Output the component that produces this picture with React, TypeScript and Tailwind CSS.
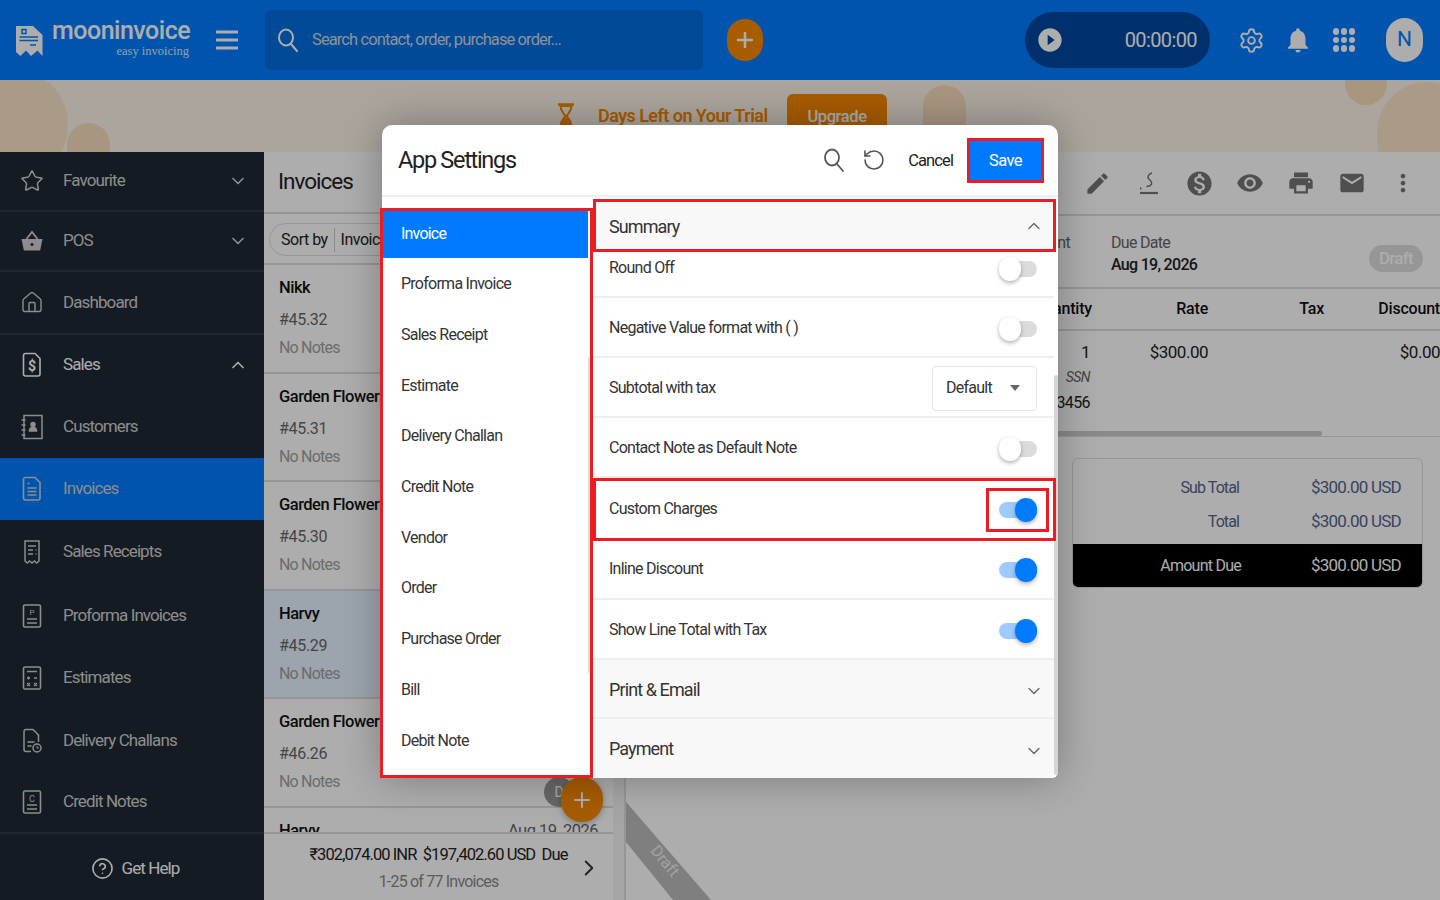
import { Star, House, CircleHelp, RotateCcw, Settings, ChevronDown, ChevronUp, ChevronRight, Plus } from "lucide-react";
import { MdEdit, MdMonetizationOn, MdRemoveRedEye, MdPrint, MdEmail, MdMoreVert, MdNotifications, MdPlayCircleFilled } from "react-icons/md";

const font = { fontFamily: "Roboto, 'Noto Sans', sans-serif" };

const SearchIcon = ({ size = 24, width = 2 }: { size?: number; width?: number }) => (
  <svg width={size} height={size} viewBox="0 0 24 24" fill="none" stroke="currentColor" strokeWidth={width} strokeLinecap="round">
    <ellipse cx="10" cy="9.500" rx="7" ry="8" />
    <path d="M15 16l6 7" />
  </svg>
);

const Doc = ({ children }: { children?: React.ReactNode }) => (
  <svg width="24" height="26" viewBox="0 0 24 26" fill="none" stroke="currentColor" strokeWidth="1.600">
    <rect x="3.500" y="2" width="17" height="22" rx="1.500" />
    {children}
  </svg>
);

const BasketIcon = () => (
  <svg width="24" height="24" viewBox="0 0 24 24" fill="currentColor">
    <path d="M1.500 10h21l-2.400 11.500H3.900z" />
    <path d="M6.500 10 12 3l5.500 7" fill="none" stroke="currentColor" strokeWidth="1.800" />
    <circle cx="12" cy="15.500" r="1.500" fill="#1f2833" />
  </svg>
);

const SalesIcon = () => (
  <svg width="24" height="26" viewBox="0 0 24 26" fill="none" stroke="currentColor" strokeWidth="1.600">
    <path d="M5.500 1.500H15l5 5V22a2 2 0 0 1-2 2H5.500a2 2 0 0 1-2-2V3.500a2 2 0 0 1 2-2z" />
    <text x="12" y="19" textAnchor="middle" fontSize="14" fontWeight="700" fill="currentColor" stroke="none">$</text>
  </svg>
);

const CustomersIcon = () => (
  <svg width="24" height="26" viewBox="0 0 24 26" fill="none" stroke="currentColor" strokeWidth="1.500">
    <rect x="4" y="1.500" width="18" height="23" />
    <path d="M1.500 6h4M1.500 11h4M1.500 16h4M1.500 21h4" />
    <circle cx="13" cy="10.500" r="2" fill="currentColor" />
    <path d="M9.500 17c0-5 7-5 7 0z" fill="currentColor" />
  </svg>
);

const InvoiceIcon = () => (
  <svg width="24" height="26" viewBox="0 0 24 26" fill="none" stroke="currentColor" strokeWidth="1.600">
    <path d="M5.500 1.500H15l5 5V22a2 2 0 0 1-2 2H5.500a2 2 0 0 1-2-2V3.500a2 2 0 0 1 2-2z" />
    <path d="M7.500 7.500h2M7.500 12h9M7.500 15.500h9M7.500 19h9" />
  </svg>
);

const ReceiptIcon = () => (
  <svg width="24" height="26" viewBox="0 0 24 26" fill="none" stroke="currentColor" strokeWidth="1.500">
    <path d="M5 2h14v20l-2.300 2-2.300-2-2.400 2-2.400-2-2.300 2L5 22z" />
    <path d="M8 7h8M8 11h5M8 15h5M15.500 11h1M15.500 15h1" />
  </svg>
);

const ProformaIcon = () => (
  <Doc>
    <text x="12" y="12" textAnchor="middle" fontSize="8" fill="currentColor" stroke="none">P</text>
    <path d="M7 16h10M7 20h10" />
  </Doc>
);

const EstimateIcon = () => (
  <Doc>
    <path d="M7 6.500h10M7 13h3M8.500 11.500v3M14 13h3M7 18l3 3M10 18l-3 3M14 18l3 3M17 18l-3 3" strokeWidth="1.300" />
  </Doc>
);

const ChallanIcon = () => (
  <svg width="24" height="26" viewBox="0 0 24 26" fill="none" stroke="currentColor" strokeWidth="1.500">
    <path d="M11 23.500H6a2 2 0 0 1-2-2v-18a2 2 0 0 1 2-2h7l5.500 5.500v7" />
    <path d="M7.500 14h7M7.500 18h4" />
    <circle cx="17" cy="20" r="4" />
    <path d="M17 18v2h2" strokeWidth="1" />
  </svg>
);

const CreditIcon = () => (
  <Doc>
    <text x="12" y="12.500" textAnchor="middle" fontSize="9" fill="currentColor" stroke="none">C</text>
    <path d="M7 16h10M7 20h10" />
  </Doc>
);

const SignIcon = () => (
  <svg width="22" height="26" viewBox="0 0 22 26" fill="none" stroke="currentColor" strokeWidth="1.500">
    <path d="M14 3c-3 1-5 3.500-3.500 5.500s4 3 3 5.500c-.7 1.700-3 2.500-5 2.500" />
    <path d="M2 18.500h1.500" strokeWidth="2" />
    <path d="M2 23h18" strokeWidth="2.200" />
  </svg>
);

const HourglassIcon = () => (
  <svg width="18" height="26" viewBox="0 0 18 26" className="shrink-0">
    <path d="M1 1.500h16M1 24.500h16" stroke="currentColor" strokeWidth="2.500" />
    <path d="M3.500 3c0 5 3 7 4.500 9.500v1C6.500 16 3.500 18 3.500 23h11c0-5-3-7-4.500-9.500v-1C11.500 10 14.500 8 14.500 3z" fill="none" stroke="currentColor" strokeWidth="2" />
    <path d="M3.500 23c0-4 3-6.500 5.500-9 2.500 2.500 5.500 5 5.500 9z" fill="currentColor" />
  </svg>
);

const AppsIcon = () => (
  <div className="grid grid-cols-3 gap-[2px]">
    {Array.from({ length: 9 }).map((_, i) => (
      <div key={i} className="h-[6.500px] w-[6px] rounded-full bg-white" />
    ))}
  </div>
);

const Logo = () => (
  <svg width="27" height="31" viewBox="0 0 27 31" className="shrink-0">
    <path d="M0 1h17l9.500 9v21l-5-5.500L15 31l-5-5.500L4.500 31 0 27z" fill="#ffffff" />
    <path d="M6 4.500h4v4H6zM3.500 12H22M3.500 15.500H22M14 20h6" stroke="#007cff" strokeWidth="1.500" fill="none" />
  </svg>
);

const sideItems = [
  { label: "Favourite", icon: <Star size={24} strokeWidth={1.500} />, h: "h-[60px]", chevron: "down", line: true },
  { label: "POS", icon: <BasketIcon />, h: "h-[60px]", chevron: "down", line: true },
  { label: "Dashboard", icon: <House size={25} strokeWidth={1.400} />, h: "h-[63px]", line: true },
  { label: "Sales", icon: <SalesIcon />, h: "h-[60px]", chevron: "up", bright: true },
  { label: "Customers", icon: <CustomersIcon />, h: "h-[63px]" },
  { label: "Invoices", icon: <InvoiceIcon />, h: "h-[62px]", active: true },
  { label: "Sales Receipts", icon: <ReceiptIcon />, h: "h-[64px]" },
  { label: "Proforma Invoices", icon: <ProformaIcon />, h: "h-[63px]" },
  { label: "Estimates", icon: <EstimateIcon />, h: "h-[62px]" },
  { label: "Delivery Challans", icon: <ChallanIcon />, h: "h-[63px]" },
  { label: "Credit Notes", icon: <CreditIcon />, h: "h-[60px]" },
];

const invoices = [
  { name: "Nikk", no: "#45.32" },
  { name: "Garden Flower", no: "#45.31" },
  { name: "Garden Flower", no: "#45.30" },
  { name: "Harvy", no: "#45.29", selected: true },
  { name: "Garden Flower", no: "#46.26" },
];

const navItems = ["Proforma Invoice", "Sales Receipt", "Estimate", "Delivery Challan", "Credit Note", "Vendor", "Order", "Purchase Order", "Bill", "Debit Note"];

const Toggle = ({ on }: { on?: boolean }) => (
  <div className="relative h-[24px] w-[38px] shrink-0">
    <div className={`absolute left-0 right-0 top-[4px] h-[16px] rounded-full ${on ? "bg-[#9ecbff]" : "bg-[#dcdcdc]"}`} />
    <div className={`absolute top-0 h-[24px] w-[22px] rounded-full shadow-[0_2px_4px_rgba(0,0,0,0.3)] ${on ? "right-0 bg-[#007bff]" : "left-0 bg-white"}`} />
  </div>
);

const Row = ({ label, children, h = "h-[60px]", text = "pt-[2px]" }: { label: string; children: React.ReactNode; h?: string; text?: string }) => (
  <div className={`mr-[2px] flex ${h} shrink-0 items-center justify-between border-b-2 border-[#eeeeee] pl-[16px] pr-[17px] text-[16px] tracking-[-0.75px] text-[#333333]`}>
    <span className={text}>{label}</span>
    {children}
  </div>
);

export default function App() {
  return (
    <div style={font} className="relative h-[900px] w-[1440px] overflow-hidden bg-white">
      <div className="flex h-full flex-col">
        {/* top bar */}
        <header className="flex h-[80px] shrink-0 items-center bg-[#007cff] text-white">
          <div className="flex w-[265px] items-center pl-[16px]">
            <Logo />
            <div className="ml-[9px] flex w-[139px] flex-col">
              <span className="-mt-[6px] text-[25px] font-medium leading-[30px] tracking-[-0.5px]">mooninvoice</span>
              <span style={{ fontFamily: "'Liberation Serif', serif" }} className="-mt-[1px] pr-[2px] text-right text-[12.500px] leading-[13px] text-[#dbe9f7]">easy invoicing</span>
            </div>
            <svg width="22" height="20" viewBox="0 0 22 20" className="ml-[25px] shrink-0" stroke="#ffffff" strokeWidth="3">
              <path d="M0 2h22M0 10h22M0 18h22" />
            </svg>
          </div>
          <div className="flex h-[60px] w-[438px] items-center rounded-[6px] bg-[#006de0] pl-[11px] text-white">
            <SearchIcon size={24} />
            <span className="ml-[12px] text-[16.500px] tracking-[-0.9px] text-[#cfd8e3]">Search contact, order, purchase order...</span>
          </div>
          <div className="ml-[24px] flex h-[42px] w-[36px] items-center justify-center rounded-full bg-[#f78800]">
            <Plus size={24} strokeWidth={2.500} className="text-white" />
          </div>
          <div className="ml-[262px] flex h-[56px] w-[185px] items-center justify-between rounded-full bg-[#00479e] pl-[11px] pr-[13px] text-white">
            <MdPlayCircleFilled size={28} />
            <span className="text-[20px] tracking-[-0.6px]">00:00:00</span>
          </div>
          <Settings size={27} strokeWidth={1.700} className="ml-[28px]" />
          <MdNotifications size={30} className="ml-[18px]" />
          <div className="ml-[20px]"><AppsIcon /></div>
          <div className="ml-[31px] flex h-[44px] w-[37px] items-center justify-center rounded-full bg-white text-[21px] text-[#007cff]">N</div>
        </header>

        {/* trial banner */}
        <div className="relative flex h-[72px] shrink-0 overflow-hidden bg-[#fdf4e8] pl-[557px]">
          <div className="absolute -left-[40px] -top-[10px] h-[110px] w-[108px] rounded-full bg-[#fbe5cb]" />
          <div className="absolute left-[67px] top-[43px] h-[60px] w-[43px] rounded-full bg-[#f8ddbd]" />
          <div className="absolute left-[923px] top-[5px] h-[70px] w-[43px] rounded-full bg-[#f8ddbd]" />
          <div className="absolute left-[1345px] -top-[20px] h-[45px] w-[42px] rounded-full bg-[#f8ddbd]" />
          <div className="absolute left-[1377px] top-[2px] h-[110px] w-[100px] rounded-full bg-[#fbe5cb]" />
          <div className="relative flex items-start">
            <div className="flex items-center gap-[23px] pt-[22px] text-[#f78800]">
              <HourglassIcon />
              <span className="w-[170px] whitespace-nowrap text-[18px] font-semibold tracking-[-0.55px]">Days Left on Your Trial</span>
            </div>
            <div className="ml-[19px] mt-[14px] flex h-[46px] w-[100px] justify-center rounded-[6px] bg-[#f78800] pt-[11px] text-[16.500px] font-medium tracking-[-0.4px] text-white">Upgrade</div>
          </div>
        </div>

        <div className="flex min-h-0 flex-1">
          {/* sidebar */}
          <aside className="flex w-[264px] shrink-0 flex-col bg-[#1f2833] text-[#d0d0d0]">
            {sideItems.map((s) => (
              <div key={s.label} className={`flex ${s.h} items-center pl-[20px] pr-[16px] ${s.line ? "border-b-2 border-[#2f3843]" : ""} ${s.active ? "bg-[#007cff]" : ""} ${s.bright ? "text-white" : ""}`}>
                <span className="flex w-[24px] justify-center">{s.icon}</span>
                <span className="ml-[19px] flex-1 text-[17px] tracking-[-0.9px]">{s.label}</span>
                {s.chevron === "down" && <ChevronDown size={20} />}
                {s.chevron === "up" && <ChevronUp size={20} />}
              </div>
            ))}
            <div className="flex flex-1 items-center justify-center gap-[8px] border-t-2 border-[#2f3843] pl-[6px] pt-[3px] text-[17px] tracking-[-0.9px] text-white">
              <CircleHelp size={23} strokeWidth={1.700} />
              <span>Get Help</span>
            </div>
          </aside>

          {/* invoice list */}
          <section className="relative flex w-[349px] shrink-0 flex-col overflow-hidden bg-white">
            <div className="flex h-[62px] shrink-0 items-center border-b-2 border-[#dddddd] pl-[14px] text-[22.500px] tracking-[-1px] text-[#222222]">Invoices</div>
            <div className="flex h-[51px] shrink-0 items-center border-b-2 border-[#dddddd] pl-[5px] pt-[2px]">
              <div className="flex h-[33px] w-[200px] items-center rounded-full border border-[#dddddd] pl-[11px] text-[16px] tracking-[-0.5px] text-[#222222]">
                <span className="border-r border-[#cccccc] pr-[6px]">Sort by</span>
                <span className="pl-[6px]">Invoice</span>
              </div>
            </div>
            {invoices.map((inv) => (
              <div key={inv.no} className={`flex h-[108.500px] shrink-0 flex-col border-b-2 border-[#dddddd] pl-[15px] pt-[12px] ${inv.selected ? "bg-[#e6f2ff]" : ""}`}>
                <span className="text-[16.500px] font-medium leading-[22px] tracking-[-0.5px] text-[#111111]">{inv.name}</span>
                <span className="mt-[10px] text-[16px] leading-[22px] tracking-[-0.3px] text-[#666666]">{inv.no}</span>
                <span className="mt-[6px] text-[16px] leading-[22px] tracking-[-0.8px] text-[#a0a0a0]">No Notes</span>
              </div>
            ))}
            <div className="flex h-[40px] shrink-0 items-start justify-between pl-[15px] pr-[15px] pt-[11px] text-[16.500px] tracking-[-0.5px]">
              <span className="font-medium text-[#111111]">Harvy</span>
              <span className="text-[#666666]">Aug 19, 2026</span>
            </div>
            <div className="absolute bottom-[93px] left-[280px] flex h-[30px] w-[30px] items-center justify-center rounded-full bg-[#999999] text-[14px] text-white">D</div>
            <div className="absolute bottom-[78px] left-[297px] flex h-[45px] w-[42px] items-center justify-center rounded-full bg-[#f78800] shadow-[0_2px_6px_rgba(0,0,0,0.3)]">
              <Plus size={24} className="text-white" />
            </div>
            <div className="absolute bottom-0 left-0 flex h-[68px] w-full items-center border-t-2 border-[#dddddd] bg-white pt-[2px]">
              <div className="flex flex-1 flex-col items-center pl-[37px]">
                <span className="whitespace-pre text-[16.500px] leading-[24px] tracking-[-0.93px] text-[#222222]">₹302,074.00 INR  $197,402.60 USD  Due</span>
                <span className="mt-[3px] text-[16px] leading-[24px] tracking-[-0.8px] text-[#888888]">1-25 of 77 Invoices</span>
              </div>
              <ChevronRight size={26} strokeWidth={1.800} className="mr-[11px] text-[#333333]" />
            </div>
          </section>
          <div className="w-[13px] shrink-0 border-r-2 border-[#dddddd] bg-[#f4f4f4]" />

          {/* invoice detail */}
          <section className="relative flex min-w-0 flex-1 flex-col overflow-hidden bg-white">
            <div className="flex h-[64px] shrink-0 items-center justify-end border-b-2 border-[#dddddd] pr-[12px] text-[#757575]">
              {[<MdEdit size={27} />, <SignIcon />, <MdMonetizationOn size={29} />, <MdRemoveRedEye size={28} />, <MdPrint size={28} />, <MdEmail size={28} />, <MdMoreVert size={28} />].map((ic, i) => (
                <span key={i} className="flex w-[50.800px] justify-center">{ic}</span>
              ))}
            </div>
            <div className="flex h-[73px] shrink-0 items-start justify-end border-b-2 border-[#dddddd] pr-[17px] pt-[16px] text-[16px] tracking-[-0.7px]">
              <span className="mr-[41px] leading-[22px] text-[#666666]">Amount</span>
              <div className="flex w-[312px] justify-between">
                <div className="flex flex-col leading-[22px]">
                  <span className="text-[#666666]">Due Date</span>
                  <span className="font-medium text-[#222222]">Aug 19, 2026</span>
                </div>
                <div className="mt-[13px] flex h-[27px] w-[54px] items-center justify-center rounded-full bg-[#dddddd] text-[17px] font-medium text-white">Draft</div>
              </div>
            </div>
            <div className="grid h-[42px] shrink-0 grid-cols-[116px_116px_116px_116px] items-center justify-end border-b-2 border-[#dddddd] text-right text-[16px] font-medium tracking-[-0.2px] text-[#111111]">
              <span>Quantity</span>
              <span>Rate</span>
              <span>Tax</span>
              <span>Discount</span>
            </div>
            <div className="grid h-[100px] shrink-0 grid-cols-[116px_116px_116px_116px] justify-end pt-[9px] text-right text-[17px] leading-[25px] tracking-[-0.5px] text-[#222222]">
              <div className="flex flex-col pr-[2px]">
                <span>1</span>
                <span className="text-[14px] italic text-[#666666]">SSN</span>
                <span className="text-[16px] tracking-[-0.6px]">123456</span>
              </div>
              <span>$300.00</span>
              <span />
              <span>$0.00</span>
            </div>
            <div className="h-[6px] shrink-0 border-b border-[#dddddd]">
              <div className="h-full w-[696px] rounded-r-full bg-[#cccccc]" />
            </div>
            <div className="mr-[17px] mt-[21px] flex w-[351px] shrink-0 flex-col self-end overflow-hidden rounded-[6px] border border-[#dddddd] text-[16px] tracking-[-0.9px]">
              <div className="mt-[12px] grid h-[34px] grid-cols-[166px_162px] items-center text-right text-[#53648c]">
                <span>Sub Total</span>
                <span className="text-[17px] tracking-[-0.75px]">$300.00 USD</span>
              </div>
              <div className="grid h-[34px] grid-cols-[166px_162px] items-center text-right text-[#53648c]">
                <span>Total</span>
                <span className="text-[17px] tracking-[-0.75px]">$300.00 USD</span>
              </div>
              <div className="mt-[5px] grid h-[43px] grid-cols-[168px_160px] items-center bg-black pt-[1px] text-right text-white">
                <span className="tracking-[-0.75px]">Amount Due</span>
                <span className="text-[17px] tracking-[-0.75px]">$300.00 USD</span>
              </div>
            </div>
            <svg className="absolute left-0 top-[648px]" width="90" height="100" viewBox="0 0 90 100">
              <polygon points="0,2 85,100 47,100 0,42" fill="#bcbcbc" />
              <text x="38" y="66" transform="rotate(50 38 62)" textAnchor="middle" fontSize="16" fill="#eeeeee">Draft</text>
            </svg>
          </section>
        </div>
      </div>

      {/* modal backdrop */}
      <div className="absolute inset-0 bg-black/[0.32]" />

      {/* app settings modal */}
      <div className="absolute left-[382px] top-[125px] flex h-[653px] w-[676px] flex-col rounded-t-[10px] rounded-b-[6px] bg-white shadow-[0_0_40px_rgba(0,0,0,0.3)]">
        <div className="flex h-[72px] shrink-0 items-center border-b-2 border-[#eeeeee] pl-[16px] pr-[14px]">
          <span className="flex-1 pt-[2px] text-[23.500px] tracking-[-1.300px] text-[#222222]">App Settings</span>
          <span className="text-[#555555]"><SearchIcon size={24} width={1.800} /></span>
          <RotateCcw size={24} strokeWidth={1.600} className="ml-[16px] text-[#555555]" />
          <span className="ml-[22px] pt-[2px] text-[16.500px] tracking-[-0.9px] text-[#222222]">Cancel</span>
          <div className="ml-[14px] border-[3px] border-[#ed1c24]">
            <div className="flex h-[39px] w-[71px] items-center justify-center bg-[#007bff] pt-[2px] text-[16.500px] tracking-[-0.6px] text-white">Save</div>
          </div>
        </div>
        <div className="relative flex min-h-0 flex-1">
          <div className="absolute bottom-[3px] right-0 top-[178px] w-[4px] rounded-full bg-[#d5d5d5]" />
          <div className="-ml-[2px] mt-[11px] w-[213px] shrink-0 border-[3px] border-[#ed1c24]">
            <div className="relative h-full">
              <div className="mr-[2px] flex h-[47px] items-center bg-[#007bff] pb-[1px] pl-[18px] text-[16px] tracking-[-0.8px] text-white">Invoice</div>
              {navItems.map((n) => (
                <div key={n} className="flex h-[50.700px] items-center pl-[18px] pt-[2px] text-[16px] tracking-[-0.75px] text-[#333333]">{n}</div>
              ))}
              <div className="absolute right-0 top-[146px] h-[316px] w-[2px] rounded-full bg-[#dddddd]" />
            </div>
          </div>
          <div className="relative flex w-[463px] shrink-0 flex-col pt-[2px]">
            <div className="flex h-[53px] shrink-0 items-center justify-between border-[3px] border-[#ed1c24] bg-[#f8f8f8] pl-[13px] pr-[9px] pt-[1px] text-[18px] tracking-[-0.9px] text-[#333333]">
              <span>Summary</span>
              <ChevronUp size={20} strokeWidth={1.600} className="text-[#666666]" />
            </div>
            <div className="mr-[2px] flex h-[46px] shrink-0 items-start justify-between border-b-2 border-[#eeeeee] pl-[16px] pr-[17px] text-[16px] leading-[24px] tracking-[-0.75px] text-[#333333]">
              <span className="pt-[4px]">Round Off</span>
              <div className="mt-[5px]"><Toggle /></div>
            </div>
            <Row label="Negative Value format with ( )"><div className="mt-[4px]"><Toggle /></div></Row>
            <Row label="Subtotal with tax">
              <div className="mt-[2px] flex h-[45px] w-[105px] items-center justify-between rounded-[4px] border border-[#e6e6e6] pl-[13px] pr-[16px]">
                <span>Default</span>
                <span className="h-0 w-0 border-x-[5px] border-t-[6px] border-x-transparent border-t-[#666666]" />
              </div>
            </Row>
            <Row label="Contact Note as Default Note"><div className="mt-[4px]"><Toggle /></div></Row>
            <div className="flex h-[63px] shrink-0 items-center justify-between border-[3px] border-[#ed1c24] pl-[13px] pr-[4px] text-[16px] tracking-[-0.75px] text-[#333333]">
              <span className="-mt-[2px]">Custom Charges</span>
              <div className="flex h-[44px] w-[63px] items-center justify-center border-[3px] border-[#ed1c24]"><Toggle on /></div>
            </div>
            <Row label="Inline Discount" h="h-[59px]" text="-mt-[1px]"><Toggle on /></Row>
            <Row label="Show Line Total with Tax" text="pt-[1px]"><div className="mt-[4px]"><Toggle on /></div></Row>
            <div className="mr-[2px] flex h-[59px] shrink-0 items-center justify-between border-b-2 border-[#eeeeee] bg-[#f8f8f8] pl-[16px] pr-[10px] text-[18px] tracking-[-0.9px] text-[#333333]">
              <span className="pt-[2px]">Print &amp; Email</span>
              <ChevronDown size={20} strokeWidth={1.600} className="mt-[4px] text-[#666666]" />
            </div>
            <div className="mr-[2px] flex flex-1 items-center justify-between rounded-bl-[4px] bg-[#f8f8f8] pl-[16px] pr-[10px] text-[18px] tracking-[-0.9px] text-[#333333]">
              <span>Payment</span>
              <ChevronDown size={20} strokeWidth={1.600} className="mt-[4px] text-[#666666]" />
            </div>
          </div>
        </div>
      </div>
    </div>
  );
}
